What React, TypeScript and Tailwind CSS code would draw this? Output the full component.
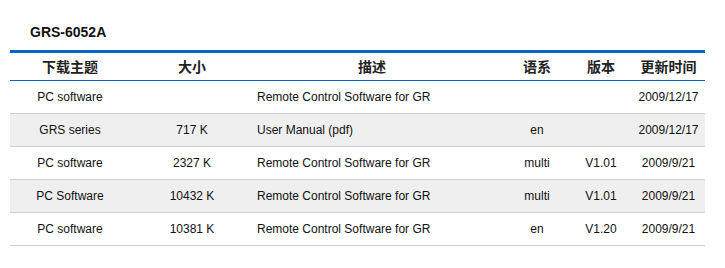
import React from 'react';

interface Row {
  title: string;
  size: string;
  desc: string;
  lang: string;
  version: string;
  date: string;
}

const rows: Row[] = [
  { title: 'PC software', size: '', desc: 'Remote Control Software for GR', lang: '', version: '', date: '2009/12/17' },
  { title: 'GRS series', size: '717 K', desc: 'User Manual (pdf)', lang: 'en', version: '', date: '2009/12/17' },
  { title: 'PC software', size: '2327 K', desc: 'Remote Control Software for GR', lang: 'multi', version: 'V1.01', date: '2009/9/21' },
  { title: 'PC Software', size: '10432 K', desc: 'Remote Control Software for GR', lang: 'multi', version: 'V1.01', date: '2009/9/21' },
  { title: 'PC software', size: '10381 K', desc: 'Remote Control Software for GR', lang: 'en', version: 'V1.20', date: '2009/9/21' },
];

const cols = 'grid grid-cols-[120px_124px_236px_94px_34px_87px]';

const App: React.FC = () => {
  return (
    <div className="w-[725px] h-[268px] bg-white pt-[22px] font-['Liberation_Sans',Arial,sans-serif] text-[12px] text-[#111]">
      <h1 className="pl-[30px] h-[20px] leading-[20px] text-[14px] font-bold text-[#111]">GRS-6052A</h1>
      <div className="mx-[10px] mt-[8px] w-[695px] border-t-[3px] border-[#0066cc]">
        {/* header */}
        <div className={`${cols} h-[28px] border-b border-[#0066cc] items-center font-bold text-[14px] text-[#222] font-['Noto_Sans_CJK_SC',sans-serif]`}>
          <div className="flex justify-center">下载主题</div>
          <div className="flex justify-center">大小</div>
          <div className="flex justify-center">描述</div>
          <div className="flex justify-center">语系</div>
          <div className="flex justify-center">版本</div>
          <div className="flex justify-center pl-[14px]">更新时间</div>
        </div>
        {rows.map((row, i) => (
          <div
            key={i}
            className={`${cols} h-[33px] items-center border-b border-[#cfcfcf] ${i % 2 === 1 ? 'bg-[#efefef]' : 'bg-white'}`}
          >
            <div className="flex justify-center whitespace-nowrap">{row.title}</div>
            <div className="flex justify-center whitespace-nowrap">{row.size}</div>
            <div className="pl-[3px] whitespace-nowrap">{row.desc}</div>
            <div className="flex justify-center whitespace-nowrap">{row.lang}</div>
            <div className="flex justify-center whitespace-nowrap">{row.version}</div>
            <div className="flex justify-center pl-[14px] whitespace-nowrap">{row.date}</div>
          </div>
        ))}
      </div>
    </div>
  );
};

export default App;
